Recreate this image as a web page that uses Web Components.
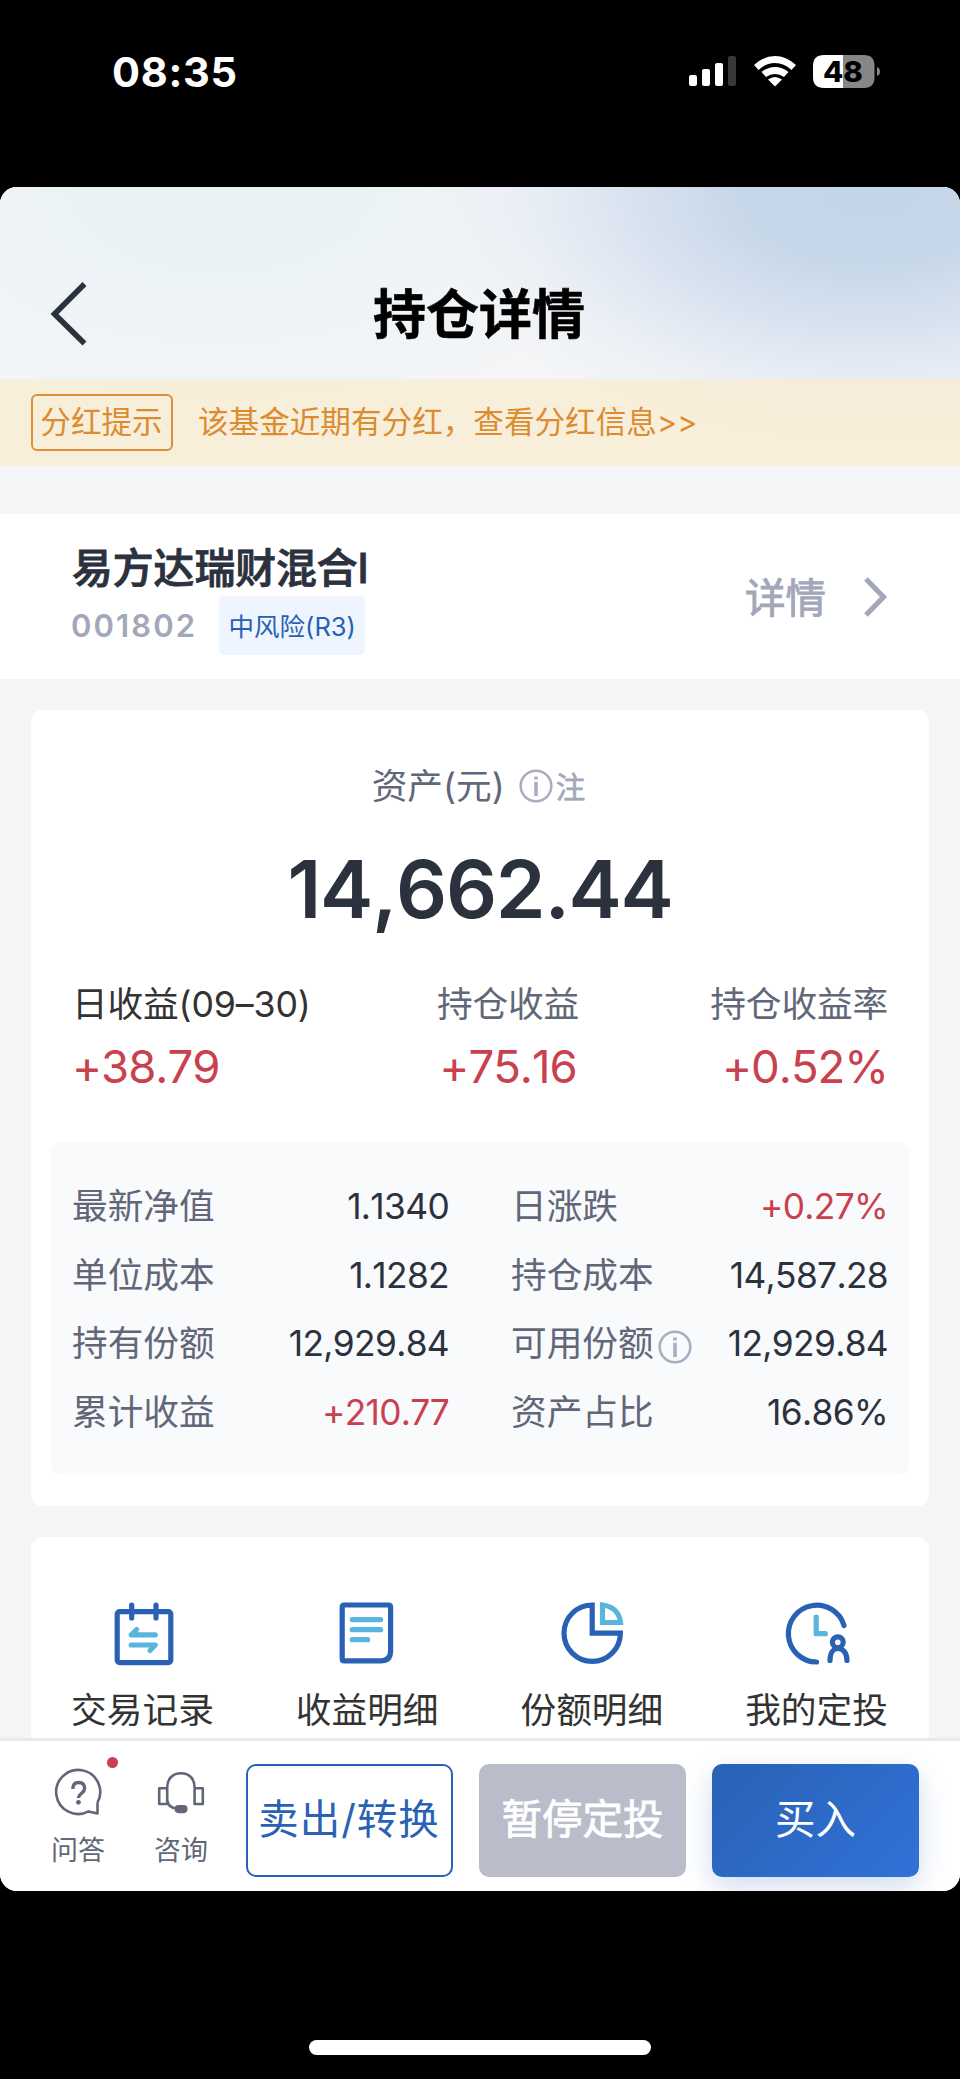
<!DOCTYPE html>
<html lang="zh-CN">
<head>
<meta charset="utf-8">
<title>持仓详情</title>
<style>
html,body{margin:0;background:#000}
body{width:960px;height:2079px;overflow:hidden;font-family:Inter,"Noto Sans CJK SC",sans-serif;font-kerning:none;color:#2c313e}
</style>
</head>
<body>
<phone-screen></phone-screen>
<script>
const define=(name,css,html)=>customElements.define(name,class extends HTMLElement{
  constructor(){
    super();
    const t=document.createElement('template');
    t.innerHTML=`<style>*{box-sizing:border-box}${css}</style>${typeof html==='function'?html(this):html}`;
    this.attachShadow({mode:'open'}).append(t.content.cloneNode(true));
  }
});

define('status-bar',`
:host{display:flex;justify-content:space-between;height:187px;padding:51px 80px 0 112px;color:#fff}
time{font-size:41.500px;font-weight:700;line-height:42px;letter-spacing:.7px}
svg{display:block;margin-top:1px}
`,`<time>08:35</time>
<svg width="194" height="42" viewBox="686 52 194 42">
<g fill="#fff"><rect x="689" y="75" width="8" height="11" rx="2"/><rect x="702" y="69" width="8" height="17" rx="2"/><rect x="715" y="63" width="8" height="23" rx="2"/><rect x="728" y="56" width="8" height="30" rx="2" opacity=".22"/>
<path d="M754 65Q764 56 775 56T796 65L791.500 70Q784 63 775 63T758.500 70Z"/><path d="M761.500 72Q768 67 775 67T788.500 72L784 77Q780 74 775 74T766 77Z"/><path d="M768 79.500Q775 74.500 782 79.500L775 86.500Z"/></g>
<path d="M824 55H843V88H824Q813 88 813 77V66Q813 55 824 55Z" fill="#fff"/><path d="M843 55H864Q874.500 55 874.500 66V77Q874.500 88 864 88H843Z" fill="#868686"/><path d="M877 67Q880 68 880 71.500T877 76Z" fill="#868686"/>
<text x="843" y="81.700" text-anchor="middle" font-size="28.500" font-weight="800" fill="#000" textLength="40" lengthAdjust="spacingAndGlyphs">48</text></svg>`);

define('nav-header',`
:host{display:grid;grid-template-columns:48px 1fr 48px;align-items:center;height:192px;padding:62px 46px 0}
h1{margin:1px 0 0 -2px;text-align:center;font-size:53px;line-height:64px;font-weight:700;color:#000;-webkit-text-stroke:.6px #000}
`,`<svg width="48" height="68" viewBox="46 280 48 68"><path d="M84.500 284L54.500 314L84.500 343.500" fill="none" stroke="#2c313e" stroke-width="5.600"/></svg><h1><slot></slot></h1>`);

define('notice-strip',`
:host{display:flex;align-items:center;gap:26px;height:87px;padding:0 31px;background:rgba(250,235,204,.66);color:#dc8c30;font-size:30.600px;line-height:44px}
b{font-weight:400;width:142px;height:57px;border:2px solid #dd9038;border-radius:6px;text-align:center;line-height:51px;white-space:nowrap;text-indent:-1px}
span{margin:-2px 0 0 -1px}
`,`<b>分红提示</b><span><slot></slot></span>`);

define('fund-summary',`
:host{display:flex;justify-content:space-between;height:165px;margin-top:48px;padding:28px 72px 0 72px;background:#fff}
.name{font-size:40.800px;line-height:52px;font-weight:500;-webkit-text-stroke:.9px #2c313e}
.meta{display:flex;align-items:center;gap:22px;margin-top:1px;height:60px}
.code{color:#a2a7b9;font-size:31px;font-weight:600;letter-spacing:2.100px;margin-left:-1px}
.risk{width:146px;height:59px;border-radius:5px;background:#eff5fe;color:#2761b4;font-size:25.500px;line-height:62px;text-align:center}
.more{display:flex;align-items:center;gap:36px;height:107px;font-size:40.500px;color:#a2a7b9;-webkit-text-stroke:.9px #a2a7b9}
svg{margin-top:3px}
`,`<div><div class="name"><slot></slot></div><div class="meta"><span class="code">001802</span><span class="risk">中风险(R3)</span></div></div>
<div class="more"><span>详情</span><svg width="26" height="42" viewBox="0 0 26 42"><path d="M4 3L21.500 21L4 39" fill="none" stroke="#a2a7b9" stroke-width="5.200"/></svg></div>`);

define('info-mark',`:host{display:inline-block;width:34px;height:34px}svg{display:block}`,
`<svg width="34" height="34" viewBox="0 0 34 34" fill="none" stroke="#a9aec0"><circle cx="17" cy="17" r="15.300" stroke-width="2.600"/><path d="M17 12.800V27M17 7.500V10.500" stroke-width="3.600"/></svg>`);

define('profit-stat',`
:host{display:block;color:#616779}
:host([mid]){text-align:center}
:host([end]){text-align:right}
.l{font-size:35.700px;line-height:48px;letter-spacing:-.15px}
.v{font-size:45.500px;line-height:56px;margin-top:11px;color:#c9414f;letter-spacing:-1px}
`,`<div class="l"><slot></slot></div><div class="v"><slot name="value"></slot></div>`);

define('data-pair',`
:host{display:flex;justify-content:space-between;align-items:center;font-size:35.700px;line-height:68.600px;color:#616779}
.k{display:flex;align-items:center;gap:4px}
.v{color:#2c313e;font-size:35.300px;letter-spacing:-.65px;margin:1px -1px -1px 0}
:host([up]) .v{color:#c9414f}
`,`<span class="k"><slot></slot></span><span class="v"><slot name="value"></slot></span>`);

define('asset-card',`
:host{display:block;width:898px;height:796px;margin:31px auto 0;padding:48px 20px 0;background:#fff;border-radius:11px}
.cap{display:flex;justify-content:center;align-items:center;height:50px;margin-left:-3px;font-size:35.700px;color:#616779}
.cap info-mark{margin:5px 3px 0 14px}
.cap small{font-size:29.500px;color:#a2a7b9;margin-top:4px;-webkit-text-stroke:.6px #a2a7b9}
.sum{margin-top:33px;text-align:center;font-size:80px;line-height:96px;font-weight:600;letter-spacing:-1.300px}
.stats{display:grid;grid-template-columns:1fr auto 1fr;margin-top:43px;padding:0 21px 0 21px}
.stats profit-stat:first-child{color:#333}
.stats profit-stat[mid]{margin-right:-56px}
.grid{display:grid;grid-template-columns:376px 376px;column-gap:63px;margin-top:47px;height:333px;padding:30px 20px 0 21px;align-content:start;background:#f9fafc;border-radius:11px}
`,`<div class="cap"><span>资产(元)</span><info-mark></info-mark><small>注</small></div>
<div class="sum">14,662.44</div>
<div class="stats"><profit-stat>日收益(09–30)<span slot="value">+38.79</span></profit-stat><profit-stat mid>持仓收益<span slot="value">+75.16</span></profit-stat><profit-stat end>持仓收益率<span slot="value">+0.52%</span></profit-stat></div>
<div class="grid">
<data-pair>最新净值<span slot="value">1.1340</span></data-pair><data-pair up>日涨跌<span slot="value">+0.27%</span></data-pair>
<data-pair>单位成本<span slot="value">1.1282</span></data-pair><data-pair>持仓成本<span slot="value">14,587.28</span></data-pair>
<data-pair>持有份额<span slot="value">12,929.84</span></data-pair><data-pair>可用份额<info-mark style="margin-top:8px"></info-mark><span slot="value">12,929.84</span></data-pair>
<data-pair up>累计收益<span slot="value">+210.77</span></data-pair><data-pair>资产占比<span slot="value">16.86%</span></data-pair>
</div>`);

const shortcuts={
trade:`<g stroke="#2962b5"><rect x="119.200" y="1611.600" width="53.600" height="51" rx="2.500"/><path d="M133.700 1605V1618M158 1605V1618"/></g><path d="M157.300 1634.800H133.200L138.700 1629.500M133.200 1645H157.300L152 1650.500" stroke="#59b5db"/>`,
detail:`<path d="M121.200 1605H165.600Q167.600 1605 167.600 1607V1651Q167.600 1660.900 157.600 1660.900H121.200Q119.200 1660.900 119.200 1658.900V1607Q119.200 1605 121.200 1605Z" stroke="#2962b5"/><path d="M129.200 1619.600H157.600M129.200 1629.700H157.600M129.200 1639.700H144.600" stroke="#59b5db"/>`,
share:`<path d="M144.200 1605A28.200 28.200 0 1 0 172.400 1633.200H144.200Z" stroke="#2962b5" stroke-linejoin="miter"/><path d="M154.500 1605V1622.500H172.500C171.500 1612 164 1606 154.500 1605Z" stroke="#59b5db" stroke-linejoin="miter"/>`,
plan:`<g stroke="#2962b5"><path d="M171 1625.500A28.400 28.400 0 1 0 143.500 1662"/><circle cx="164.800" cy="1642.200" r="5.400"/><path d="M157 1660.500C157 1652 161 1648.500 165 1648.500S174 1652 174 1660.500"/></g><path d="M143.200 1617V1633.700H152.300" stroke="#59b5db"/>`
};
define('shortcut-item',`
:host{display:flex;flex-direction:column;align-items:center;color:#333;font-size:35.700px;line-height:48px}
svg{display:block;margin-bottom:18px}
`,el=>`<svg width="68" height="68" viewBox="110 1600 68 68" fill="none" stroke-width="5.200" stroke-linecap="round" stroke-linejoin="round">${shortcuts[el.getAttribute('icon')]}</svg><slot></slot>`);

define('shortcut-card',`
:host{display:grid;grid-template-columns:repeat(4,224.700px);justify-content:center;width:898px;height:260px;margin:31px auto 0;padding:63px 1px 0 0;background:#fff;border-radius:11px}
`,`<shortcut-item icon="trade">交易记录</shortcut-item><shortcut-item icon="detail">收益明细</shortcut-item><shortcut-item icon="share">份额明细</shortcut-item><shortcut-item icon="plan">我的定投</shortcut-item>`);

define('action-button',`
:host{display:block;width:207px;height:113px;border-radius:10px;text-align:center;font-size:40.500px;line-height:111px;color:#fff;white-space:nowrap}
:host([kind=sell]){border:2px solid #2962b5;color:#2962b5;line-height:107px;background:#fff;letter-spacing:1px;text-indent:-1px}
:host([kind=pause]){background:#b9bdca;-webkit-text-stroke:.8px #fff}
:host([kind=buy]){background:linear-gradient(135deg,#2962b5,#3072d8);box-shadow:0 10px 28px rgba(41,98,181,.22)}
`,`<slot></slot>`);

define('tab-tool',`
:host{display:flex;flex-direction:column;align-items:center;width:60px;font-size:27px;line-height:36px;color:#616779;position:relative}
:host([dot])::after{content:"";position:absolute;left:59px;top:-7px;width:11px;height:11px;border-radius:50%;background:#c9414f}
svg{display:block;margin-bottom:9px}
`,el=>el.getAttribute('icon')==='ask'
?`<svg width="52" height="60" viewBox="53 1764 52 60" fill="none" stroke="#616779" stroke-width="2.600" stroke-linejoin="round"><path d="M98.500 1802.500V1813.500L89.500 1811.400A22 22 0 1 1 98.500 1802.500"/><path d="M73.800 1789Q73.800 1782.500 79.700 1782.500T85.600 1788.500C85.600 1793 79.500 1793.500 79.500 1798" stroke-width="3.400"/><circle cx="79.400" cy="1802.300" r="2.400" fill="#616779" stroke="none"/></svg><slot></slot>`
:`<svg width="52" height="60" viewBox="156 1764 52 60" fill="none" stroke="#616779" stroke-width="2.600" stroke-linejoin="round"><path d="M168.200 1804V1787.500C168.200 1778.500 174 1773.300 182 1773.300S195.600 1778.500 195.600 1787.500V1804M168.200 1800Q169 1808 178 1808.500M168.200 1788.300H160.200V1804H168.200ZM195.600 1788.300H203.800V1804H195.600Z"/><rect x="176.800" y="1806.300" width="10.500" height="5.600" rx="2.800" fill="#616779"/></svg><slot></slot>`);

define('action-bar',`
:host{display:flex;height:153px;flex:none;border-top:3px solid #e9eaec;padding:23px 41px 0 48px;background:#fff}
tab-tool+tab-tool{margin-left:43px}
action-button{margin-left:26px}
action-button[kind=sell]{margin-left:35px}
`,`<tab-tool icon="ask" dot>问答</tab-tool><tab-tool icon="service">咨询</tab-tool><action-button kind="sell">卖出/转换</action-button><action-button kind="pause">暂停定投</action-button><action-button kind="buy">买入</action-button>`);

define('phone-screen',`
:host{display:flex;flex-direction:column;width:960px;height:2079px;background:#000}
main{display:flex;flex-direction:column;height:1704px;border-radius:17px;overflow:hidden;background:#f3f5f7}
.body{flex:1;min-height:0;overflow:hidden;
background:radial-gradient(ellipse 440px 260px at 870px 0,#c3d5e8 0,rgba(195,213,232,.92) 30%,rgba(200,215,235,.6) 55%,rgba(215,225,242,.25) 80%,rgba(243,245,247,0) 100%) no-repeat,radial-gradient(ellipse 420px 230px at 220px 0,#e8f1f4 0,rgba(236,243,246,.8) 50%,rgba(243,245,247,0) 100%) no-repeat #f3f5f7}
.home{width:342px;height:15px;border-radius:8px;background:#fff;margin:149px auto 0}
`,`<status-bar></status-bar><main><div class="body"><nav-header>持仓详情</nav-header><notice-strip>该基金近期有分红，查看分红信息&gt;&gt;</notice-strip><fund-summary>易方达瑞财混合I</fund-summary><asset-card></asset-card><shortcut-card></shortcut-card></div><action-bar></action-bar></main><div class="home"></div>`);
</script>
</body>
</html>
